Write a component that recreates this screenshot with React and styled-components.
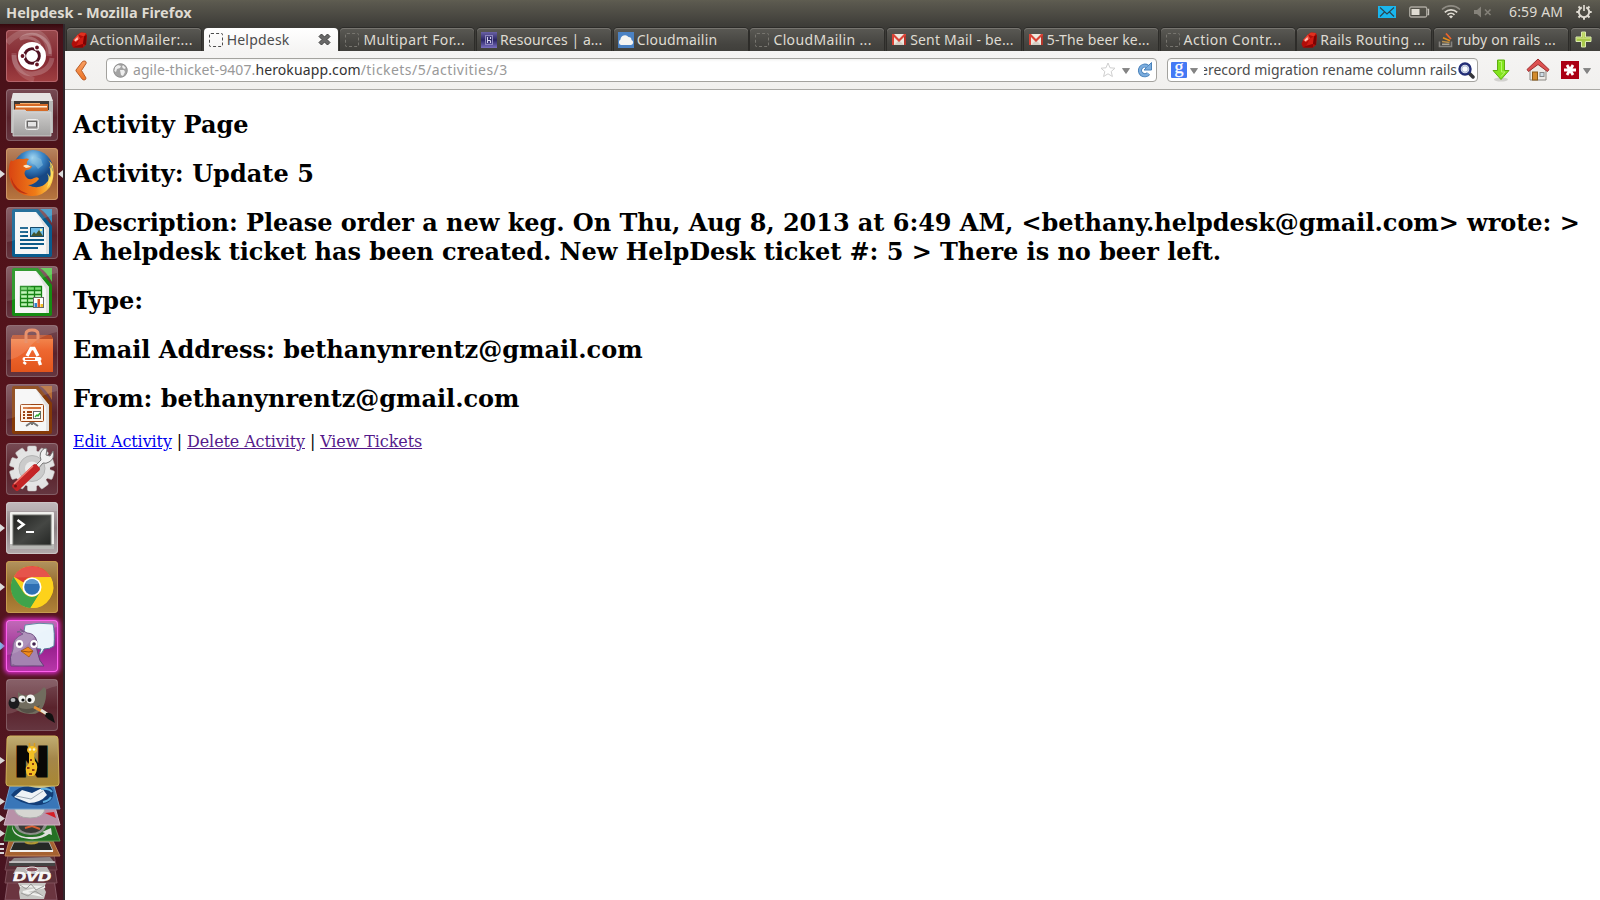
import React from "react";
import styled, { createGlobalStyle } from "styled-components";

const ui = `"Noto Sans", "Open Sans", sans-serif`;

const Global = createGlobalStyle`
  * { box-sizing: border-box; }
  html, body { margin: 0; padding: 0; background: #fff; overflow: hidden; }
  svg { display: block; flex: none; }
`;

const Desktop = styled.div`
  width: 1600px;
  height: 900px;
  display: flex;
  flex-direction: column;
  overflow: hidden;
  background: linear-gradient(#5f5d51 0, #5a584e 3px, #3c3b37 27px, #3c3b37 52px);
`;

const Panel = styled.header`
  height: 24px;
  flex: none;
  display: flex;
  align-items: center;
  justify-content: space-between;
  padding: 0 8px 0 6px;
  font-family: ${ui};
  color: #dfdbd2;
`;

const Label = styled.span`
  font-size: ${(p) => p.$size || 14}px;
  font-weight: ${(p) => (p.$bold ? 700 : 400)};
  letter-spacing: ${(p) => p.$track || 0}px;
  line-height: 20px;
  white-space: pre;
`;

const Indicators = styled.div`
  display: flex;
  align-items: center;
`;

const Slot = styled.div`
  width: ${(p) => p.$w}px;
  flex: none;
  display: flex;
  align-items: center;
`;

const Body = styled.div`
  flex: 1;
  min-height: 0;
  display: flex;
`;

const Launcher = styled.nav`
  width: 65px;
  flex: none;
  display: flex;
  flex-direction: column;
  gap: 7px;
  padding-top: 6px;
  background: linear-gradient(#35090d 0, #48121a 5px, #4d1219 100px, #56141d 450px, #501620 750px, #451320 876px);
  border-right: 2px solid #30272c;
`;

const LaunchRow = styled.div`
  height: 52px;
  flex: none;
  display: flex;
  align-items: center;
  justify-content: space-between;
`;

const Pip = styled.svg`
  visibility: ${(p) => (p.$on ? "visible" : "hidden")};
`;

const Tile = styled.div`
  width: 52px;
  height: 52px;
  overflow: hidden;
  border-radius: 4px;
  margin-left: 1px;
  background: ${(p) => p.$bg};
  box-shadow: inset 0 0 0 1px ${(p) => p.$edge || "rgba(255,255,255,.2)"}, ${(p) => p.$glow || "0 0 0 transparent"};
`;

const Browser = styled.section`
  flex: 1;
  min-width: 0;
  display: flex;
  flex-direction: column;
`;

const TabStrip = styled.div`
  height: 27px;
  flex: none;
  display: flex;
  align-items: flex-end;
  gap: 2.7px;
  padding-left: 2px;
`;

const Tab = styled.div`
  width: ${(p) => p.$w || 134}px;
  height: 23px;
  flex: none;
  display: flex;
  align-items: center;
  gap: 3px;
  padding: 0 4px;
  font-family: ${ui};
  border-radius: 4px 4px 0 0;
  color: ${(p) => (p.$active ? "#4c4c4c" : "#dfdbd2")};
  background: ${(p) => (p.$active ? "linear-gradient(#fff, #f5f4f3)" : "linear-gradient(#5a5954, #454440 70%, #403f3b)")};
  box-shadow: ${(p) => (p.$active ? "none" : "inset 0 1px 0 #777570, 0 0 0 1px #2d2c29")};
`;

const IconBox = styled.div`
  width: 16px;
  height: 16px;
  flex: none;
  display: flex;
  align-items: center;
  justify-content: center;
`;

const Blank = styled.div`
  width: 14px;
  height: 14px;
  border: 1px dashed ${(p) => (p.$active ? "#4c4c4c" : "#77756f")};
  border-radius: 2px;
`;

const CloseSlot = styled.div`
  margin-left: auto;
  padding-right: 3px;
`;

const Toolbar = styled.div`
  height: 39px;
  flex: none;
  display: flex;
  align-items: center;
  padding: 0 0 0 10px;
  background: linear-gradient(#f5f4f3, #f1f0ee);
  border-bottom: 1px solid #aaa9a5;
`;

const Field = styled.div`
  width: ${(p) => p.$w}px;
  height: 24px;
  flex: none;
  display: flex;
  align-items: center;
  margin-left: ${(p) => p.$ml}px;
  padding: 0 ${(p) => p.$pr}px 0 ${(p) => p.$pl}px;
  border: 1px solid #a3a29e;
  border-radius: 4px;
  background: linear-gradient(#f3f3f2, #fff 3px);
  font-family: ${ui};
`;

const Url = styled.div`
  flex: 1;
  display: flex;
  padding-left: 5px;
  color: #999;
  white-space: nowrap;
`;

const Host = styled(Label)`
  color: #333;
`;

const Query = styled.div`
  width: 254px;
  height: 20px;
  display: flex;
  justify-content: flex-end;
  overflow: hidden;
  margin: 0 1px 0 6px;
  color: #4c4c4c;
`;

const Tools = styled.div`
  flex: 1;
  display: flex;
  align-items: center;
  padding-left: 13px;
`;

const HomeButton = styled.div`
  margin: 0 11px 0 15px;
`;

const ToolGroup = styled.div`
  display: flex;
  align-items: center;
  gap: ${(p) => p.$gap || 4}px;
`;

const Page = styled.main`
  flex: 1;
  padding: 0 8px;
  background: #fff;
  color: #000;
  font-family: "DejaVu Serif", serif;
`;

const Heading = styled.h2`
  margin: 20px 0;
  font-size: 24px;
  font-weight: 700;
  line-height: 29px;
  letter-spacing: ${(p) => p.$track || 0}px;
`;

const Links = styled.div`
  margin-top: -1px;
  font-size: 16px;
  line-height: 19px;
  letter-spacing: -0.11px;
`;

const Link = styled.a`
  color: ${(p) => (p.$visited ? "#551a8b" : "#0000ee")};
  text-decoration: underline;
`;

/* ---------- small icons ---------- */

const Ruby = () => (
  <svg width="16" height="16" viewBox="0 0 16 16">
    <path d="M.5 12 2 8 7 2.500 10 .5 15 1 16 4 15 13 12 15.500 2 15.500Z" fill="#b30d09" />
    <path d="M7 2.500 10 .5 15 1 13 4.500Z" fill="#e0301f" />
    <path d="M2 8 7 2.500 9 6.500 5 10Z" fill="#ef4a38" />
    <path d="M9 6.500 13 4.500 12 12 5 14Z" fill="#cf1b13" />
    <path d="M13 4.500 15.500 3 15 13 12 12Z" fill="#7c0202" />
    <path d="M3.500 8 6.500 5 7 7.500 4 9.500Z" fill="#ffc5bb" />
    <path d="M5 14 12 12 12 15.500 2 15.500Z" fill="#8d0503" />
  </svg>
);
const Heroku = () => (
  <svg width="16" height="16" viewBox="0 0 16 16">
    <defs><linearGradient id="hk" x2="0" y2="1"><stop stopColor="#6a61a6" /><stop offset=".5" stopColor="#2b2565" /><stop offset="1" stopColor="#7a6fc0" /></linearGradient></defs>
    <rect width="16" height="16" fill="url(#hk)" />
    <rect x="4.500" y="3.500" width="7" height="9" fill="none" stroke="#8d86bd" />
    <path d="M6.500 5v6M6.500 8.500h3V11M9.500 5v2" fill="none" stroke="#d5d2ec" />
  </svg>
);
const Cloud = () => (
  <svg width="16" height="16" viewBox="0 0 16 16">
    <rect width="16" height="16" fill="#4b82c4" />
    <path d="M3 13a3 3 0 0 1-.5-5.500A4.500 4.500 0 0 1 10.500 5a3 3 0 0 1 3 3A2.600 2.600 0 0 1 13 13Z" fill="#f4f4f2" />
  </svg>
);
const Gmail = () => (
  <svg width="16" height="16" viewBox="0 0 16 16">
    <rect x="1" y="2" width="14" height="11" fill="#eee9df" />
    <path d="M3 13 8 8l5 5Z" fill="#d5cfc5" />
    <path d="M1 13V2h2l5 5 5-5h2v11h-2V5L8 10 3 5v8Z" fill="#db4437" />
    <path d="M13 13V5l2-2v10Z" fill="#b5362b" />
  </svg>
);
const Stack = () => (
  <svg width="16" height="16" viewBox="0 0 16 16" fill="none">
    <path d="M1.500 9.500v5h12v-5" stroke="#85837f" strokeWidth="1.600" />
    <path d="M4 12.300h7.500" stroke="#aaa69a" strokeWidth="1.600" />
    <path d="M4 9.500l7.500 1" stroke="#b98f4c" strokeWidth="1.600" />
    <path d="M5 5.800l7 3" stroke="#e58e1b" strokeWidth="1.700" />
    <path d="M8 1.500l5 5.500" stroke="#f0642a" strokeWidth="1.800" />
  </svg>
);
const Close = () => (
  <svg width="13" height="13" viewBox="0 0 13 13">
    <path d="M3.500 1 6.500 4 9.500 1 12 3.500 9 6.500 12 9.500 9.500 12 6.500 9 3.500 12 1 9.500 4 6.500 1 3.500Z" fill="#686868" stroke="#3e3e3e" />
  </svg>
);
const Plus = () => (
  <svg width="18" height="17" viewBox="0 0 18 17">
    <path d="M6.500 1h4v5H16v4.500h-5.500V16h-4v-5.500H1V6h5.500Z" fill="#a8c84a" stroke="#dcebb0" />
    <path d="M7.500 2h2v5H15v1H2V7h5.500Z" fill="#c5dc72" />
  </svg>
);
const MailInd = () => (
  <svg width="18" height="12" viewBox="0 0 18 12">
    <rect width="18" height="12" fill="#19b6ee" />
    <path d="M2 1.500 9 8l7-6.500M2 10.500 6.500 6M16 10.500 11.500 6" fill="none" stroke="#2b4450" strokeWidth="1.100" />
  </svg>
);
const Battery = () => (
  <svg width="21" height="12" viewBox="0 0 21 12">
    <rect x=".7" y="1" width="17" height="10" rx="1.500" fill="none" stroke="#aaa79e" strokeWidth="1.300" />
    <rect x="2.500" y="3" width="8" height="6" fill="#dfdbd2" />
    <path d="M18.500 3.500h1v5h-1" fill="none" stroke="#c4c0b8" strokeWidth="1.300" />
  </svg>
);
const Wifi = () => (
  <svg width="20" height="14" viewBox="0 0 20 14" fill="none">
    <path d="M1 4.500a13 13 0 0 1 18 0" stroke="#8f8c84" strokeWidth="1.600" />
    <path d="M3.800 7.300a9 9 0 0 1 12.400 0" stroke="#dfdbd2" strokeWidth="1.700" />
    <path d="M6.500 9.800a5 5 0 0 1 7 0" stroke="#dfdbd2" strokeWidth="1.700" />
    <path d="M8 11.500a3 3 0 0 1 4 0l-2 2Z" fill="#dfdbd2" />
  </svg>
);
const Muted = () => (
  <svg width="18" height="12" viewBox="0 0 18 12">
    <path d="M0 4h3l4-3.500v11L3 8H0Z" fill="#85827a" />
    <path d="m11 3.500 5.500 5.500M16.500 3.500 11 9" stroke="#85827a" strokeWidth="1.500" />
  </svg>
);
const Gear = () => (
  <svg width="16" height="16" viewBox="0 0 16 16" fill="none" stroke="#dfdbd2">
    <path d="M5.800 3.300a5.200 5.200 0 1 0 4.400 0" strokeWidth="2" />
    <path d="M8 1v6" strokeWidth="1.700" />
    <path d="M.3 8H3M13 8h2.700M8 13v2.800M2.500 2.500l2 2M13.500 2.500l-2 2M2.500 13.500l2-2M13.500 13.500l-2-2" strokeWidth="2" />
  </svg>
);
const Back = () => (
  <svg width="13" height="21" viewBox="0 0 13 21">
    <defs><linearGradient id="bk" x2="0" y2="1"><stop stopColor="#f9a063" /><stop offset="1" stopColor="#ed7426" /></linearGradient></defs>
    <path d="M9 1Q11 .5 11.300 3L6.500 10.500 11 18Q11 20 9 20L7.500 19.500 1 11V10L7.500 1.500Z" fill="url(#bk)" stroke="#b85c26" />
  </svg>
);
const Globe = () => (
  <svg width="15" height="15" viewBox="0 0 15 15">
    <circle cx="7.500" cy="7.500" r="7" fill="#a4a4a4" />
    <path d="M2 4 5 2 8 3 7 5 4 6 3 9 1 8ZM7 7l4 0 1 2-2 4-2-1ZM10 2l3 3-2 1-2-2Z" fill="#eee" />
    <circle cx="7.500" cy="7.500" r="6.700" fill="none" stroke="#939393" />
  </svg>
);
const Star = () => (
  <svg width="16" height="16" viewBox="0 0 16 16">
    <path d="m8 1 2 4.800 5 .4-3.800 3.300 1.200 5L8 11.800 3.600 14.500l1.200-5L1 6.200l5-.4Z" fill="#fff" stroke="#cfcfcf" />
  </svg>
);
const Caret = () => (
  <svg width="8" height="8" viewBox="0 0 8 8">
    <path d="M.5 2.500h7L4 7.500Z" fill="#858585" stroke="#666" strokeWidth=".6" />
  </svg>
);
const Reload = () => (
  <svg width="16" height="16" viewBox="0 0 16 16">
    <path d="M11.500 4.500A4.800 4.800 0 1 0 12.500 11.500" fill="none" stroke="#4a82ba" strokeWidth="4.200" />
    <path d="M15.500.5v7.500H8Z" fill="#7badde" stroke="#4a82ba" />
    <path d="M11.500 4.500A4.800 4.800 0 1 0 12.500 11.500" fill="none" stroke="#7badde" strokeWidth="2.500" />
  </svg>
);
const GoogleG = () => (
  <svg width="16" height="16" viewBox="0 0 16 16">
    <rect width="16" height="16" rx="1" fill="#4479f5" />
    <text x="8" y="11.300" fontSize="18" fill="#fff" stroke="#fff" strokeWidth=".3" textAnchor="middle" fontFamily="Liberation Serif, serif">g</text>
  </svg>
);
const Magnifier = () => (
  <svg width="17" height="17" viewBox="0 0 17 17">
    <path d="m10.500 10.500 4.500 4.500" stroke="#35363b" strokeWidth="3.500" strokeLinecap="round" />
    <circle cx="7" cy="7" r="5.500" fill="#e2e9f4" stroke="#232e77" strokeWidth="2.400" />
    <circle cx="7" cy="7" r="3.200" fill="#f9fbff" stroke="#a8b4cf" />
  </svg>
);
const Download = () => (
  <svg width="20" height="23" viewBox="0 0 20 23">
    <ellipse cx="10" cy="20.500" rx="7" ry="2" fill="#d2d1ce" />
    <path d="M6.500 1h7v10.500H18L10 20.500 2 11.500h4.500Z" fill="#83e51d" stroke="#5fae12" />
    <path d="M8 2.500h2.500V13H14l-4 4.500" fill="none" stroke="#b7f56d" />
  </svg>
);
const Home = () => (
  <svg width="24" height="24" viewBox="0 0 24 24">
    <path d="M4 12 12 5l8 7v10H4Z" fill="#eceae6" stroke="#8c8984" />
    <rect x="6.500" y="14" width="5" height="8" fill="#d28b2d" stroke="#8b5a17" />
    <rect x="14" y="14.500" width="4" height="4" fill="#cfdce6" stroke="#85888a" />
    <path d="M12 1 23 11.500 21.500 13.500 12 6.500 2.500 13.500 1 11.500Z" fill="#dc5050" stroke="#9e2f2f" />
  </svg>
);
const LastPass = () => (
  <svg width="18" height="18" viewBox="0 0 18 18">
    <rect width="18" height="18" fill="#ab0014" />
    <path d="M3 9h12M6 4l6 10M12 4 6 14" stroke="#fff" strokeWidth="2.800" />
  </svg>
);

/* ---------- launcher icons, 52x52 ---------- */

const Art = ({ children }) => <svg width="52" height="52" viewBox="0 0 52 52">{children}</svg>;

const Gloss = () => <path d="M1 1h50v6Q30 12 22 24 12 34 1 35Z" fill="#fff" opacity=".13" />;

const Ubuntu = () => (
  <Art>
    <g fill="none" stroke="#fff">
      <path d="M44 24A18 18 0 0 0 14 9Q28 5 34 15" strokeWidth="3" opacity=".23" />
      <path d="M8 25A18 18 0 0 0 26 44Q44 42 46 28" strokeWidth="5" opacity=".2" />
      <path d="M1 13Q14 -1 30 2Q44 8 43 26" strokeWidth="6" opacity=".15" />
      <path d="M8 23Q8 44 28 50" strokeWidth="5" opacity=".13" />
    </g>
    <circle cx="26" cy="26" r="14" fill="#fff" />
    <circle cx="26" cy="26" r="7.300" fill="none" stroke="#4f1020" strokeWidth="3" />
    <g stroke="#fff" strokeWidth="1.200" fill="#651323">
      <circle cx="16.500" cy="26" r="2.500" /><circle cx="31" cy="17.500" r="2.500" /><circle cx="31" cy="34.500" r="2.500" />
    </g>
    <circle cx="26" cy="26" r="5.500" fill="#fff" />
  </Art>
);
const Files = () => (
  <Art>
    <defs><linearGradient id="fi" x2="0" y2="1"><stop stopColor="#d0cfce" /><stop offset="1" stopColor="#a2a1a0" /></linearGradient></defs>
    <path d="M7 4h37l3 9v31H5V13Z" fill="#b9b9b8" />
    <path d="M7 4h37l3 8H5Z" fill="#e4e3e2" />
    <path d="M8 12h35v9H8Z" fill="#3e3935" />
    <path d="M9 15h33v7H9Z" fill="#d66b27" /><path d="M10 17h31v1.500H10Z" fill="#fff0d8" /><path d="M14 14h20v1H14Z" fill="#f5af6e" />
    <path d="M7 21h12l2 2h24v24H7Z" fill="url(#fi)" stroke="#d9d8d7" strokeWidth=".8" />
    <rect x="19.500" y="30.500" width="13" height="10" rx="2" fill="#b2b1b0" stroke="#efefee" />
    <rect x="21.500" y="32.500" width="9" height="5.500" fill="#e4e4e4" stroke="#686766" />
  </Art>
);
const Firefox = () => (
  <Art>
    <defs>
      <radialGradient id="fg" cx=".5" cy=".2"><stop stopColor="#a5d8f2" /><stop offset=".5" stopColor="#3c88c8" /><stop offset="1" stopColor="#174784" /></radialGradient>
      <linearGradient id="ff"><stop stopColor="#d94412" /><stop offset=".6" stopColor="#ef7c17" /><stop offset="1" stopColor="#ffd64b" /></linearGradient>
    </defs>
    <circle cx="27" cy="22" r="20" fill="url(#fg)" />
    <path d="M28 8l7 3 2 6-5 4-3-4-4-2Z" fill="#8dc3df" opacity=".5" />
    <path d="M5 12q1 2 4 0 3-2 8-1 4-1 6 0-3 3-2 6l5 1q-1 4-6 4-3 3 0 7 3 4 8 1 4-2 5 1-5 6-11 6 12 6 20-4 5-7 1-15l4 6q-1-8-5-12 4 3 5 6 2 12-3 21Q36 49 25 48 9 47 4 32 1 20 5 12Z" fill="url(#ff)" />
    <path d="M5 29q4 13 17 17-9 0-14-7Q5 34 5 29Z" fill="#bd3211" />
    <path d="M44 14q7 16-3 26 3-10 0-15l4 5Z" fill="#ffe269" opacity=".8" />
    <path d="M17 18q3-2 5-1l3 2-5 1Z" fill="#fce6c5" />
  </Art>
);
const Doc = ({ c, light, children }) => (
  <Art>
    <path d="M8 2h24l14 17v29q0 2-2 2H8q-2 0-2-2V4q0-2 2-2Z" fill={c} />
    <path d="M34 2h12v14Q40 5 34 2Z" fill={light} />
    <path d="M9 5h21l13 16v26H9Z" fill="#f6f6f6" />
    <path d="M30 5 43 21V47H40V23Z" fill="#d8d8d8" opacity=".7" />
    {children}
    <Gloss />
  </Art>
);
const Writer = () => (
  <Doc c="#095c8e" light="#3994c4">
    <path d="M14 21h8M14 25h8M14 29h8M14 33h24M14 37h24M14 41h18" stroke="#0c5a88" strokeWidth="2" />
    <rect x="24.500" y="20.500" width="13" height="9" fill="#70bde8" stroke="#174a6b" />
    <path d="m25 29 3-4 2 2 3-4 4 6Z" fill="#44542d" />
    <circle cx="35" cy="23" r="1.200" fill="#fff5a0" />
  </Doc>
);
const Calc = () => (
  <Doc c="#168c13" light="#55c64b">
    <rect x="14" y="20" width="22" height="20" fill="#bdf3b5" />
    <path d="M14 20h22v4H14Z" fill="#78d970" />
    <path d="M14 20.500h22M14 24.500h22M14 28.500h22M14 32.500h22M14 36.500h22M14 40.500h22M14.500 20v20M21.500 20v20M28.500 20v20M35.500 20v20" stroke="#168215" strokeWidth="1.300" />
    <rect x="27.500" y="31.500" width="10" height="10" fill="#fff" stroke="#686868" />
    <path d="M28.500 37h2.500v4h-2.500Z" fill="#2d83cf" /><path d="M31.500 33h2.500v8h-2.500Z" fill="#dc5a26" /><path d="M34.500 38H37v3h-2.500Z" fill="#f1bd25" />
  </Doc>
);
const Impress = () => (
  <Doc c="#853a08" light="#b56b35">
    <path d="m20 42 6-4 6 4M26 36v5" stroke="#777" strokeWidth="2" fill="none" />
    <rect x="14.500" y="20.500" width="23" height="17" rx="1" fill="#fff4e8" stroke="#9b4312" />
    <path d="M17 24h18" stroke="#d2713a" strokeWidth="2" />
    <path d="M17 28h2m2 0h5M17 31h2m2 0h5M17 34h2m2 0h5" stroke="#9b4312" strokeWidth="2" />
    <rect x="27.500" y="27.500" width="7" height="7" fill="#fff" stroke="#666" />
    <path d="m29 33 2-2 1 1 2-3" stroke="#2ca52a" fill="none" strokeWidth="1.400" />
  </Doc>
);
const Software = () => (
  <Art>
    <defs><linearGradient id="sw" x2="0" y2="1"><stop stopColor="#f38d55" /><stop offset=".4" stopColor="#ee6831" /><stop offset="1" stopColor="#e2551c" /></linearGradient></defs>
    <path d="M5 14 7 10h38l2 4v33H5Z" fill="url(#sw)" />
    <path d="M5 14 7 10h38l2 4Z" fill="#bb502c" />
    <path d="M20 18V9q0-4 6-4t6 4v9" fill="none" stroke="#e58258" strokeWidth="3" />
    <path d="M21 31 25 23.500h3L32 31M18 39l1.500-2M33 36l1.500 4" stroke="#fff" strokeWidth="3.300" fill="none" />
    <path d="M18.500 34h15" stroke="#fff" strokeWidth="4" strokeLinecap="round" />
    <path d="M19 34h10" stroke="#ed6932" strokeWidth="1.800" />
    <Gloss />
  </Art>
);
const Settings = () => (
  <Art>
    <g fill="#e2e2e2" stroke="#c2c2c2" strokeWidth=".5">
      {[0, 36, 72, 108, 144, 180, 216, 252, 288, 324].map((a) => (
        <rect key={a} x="21.500" y="3" width="9" height="11" rx="1.500" transform={`rotate(${a} 26 25.500)`} />
      ))}
    </g>
    <circle cx="26" cy="25.500" r="18" fill="#e4e4e4" />
    <circle cx="26" cy="25.500" r="13" fill="#cbcbcb" stroke="#b5b5b5" />
    <circle cx="26" cy="25.500" r="7" fill="#ececec" />
    <path d="M28 24 35 17q-3-8 4-12l2 1-1 6 4 1 3-5q2 8-4 11-3 2-6 1l-6 7Z" fill="#f1f1f1" stroke="#777" />
    <path d="m8 43 21-20 3 3-21 20Z" stroke="#c32325" strokeWidth="4" strokeLinejoin="round" fill="#d83832" />
    <path d="m8 41 19-18" stroke="#f07a70" strokeWidth="1.500" />
    <circle cx="9.500" cy="43" r="1.500" fill="#6e1212" />
  </Art>
);
const Terminal = () => (
  <Art>
    <defs><linearGradient id="tm" x2="1" y2="1"><stop stopColor="#20211f" /><stop offset=".55" stopColor="#454744" /><stop offset="1" stopColor="#252725" /></linearGradient></defs>
    <rect x="4" y="10" width="44" height="36" rx="1" fill="#f0f0ed" />
    <path d="M4 42h44v5H4Z" fill="#b8b8b5" />
    <rect x="7" y="13" width="38" height="30" fill="url(#tm)" stroke="#6e716c" />
    <path d="m11.500 18 6 4.500-6 4.500" fill="none" stroke="#fff" strokeWidth="2.600" />
    <path d="M20 30h8" stroke="#fff" strokeWidth="2" />
    <path d="M1 1h50v8H1Z" fill="#fff" opacity=".16" />
  </Art>
);
const Chrome = () => (
  <Art>
    <circle cx="26" cy="26" r="21" fill="#fdd21b" />
    <path d="M7.800 15.500A21 21 0 0 1 44.500 16H26a10 10 0 0 0-8.500 5.500Z" fill="#de3f35" />
    <path d="M7.500 15.800A21 21 0 0 0 24.500 47L34.500 31A10 10 0 0 1 17.300 31Z" fill="#3fa34b" />
    <path d="M44.800 16A21 21 0 0 1 24.500 47L34.500 31Q38 23 32 16Z" fill="#fdd21b" />
    <path d="M7.500 16.500Q10 10 18 6.500q12-4 22 4l4.500 5.500Z" fill="#ed6a61" opacity=".5" />
    <circle cx="26" cy="26" r="9.500" fill="#fff" />
    <circle cx="26" cy="26" r="7.800" fill="#2f70b4" />
    <path d="M19 23a7.500 7.500 0 0 1 14 0Z" fill="#5c98ce" />
  </Art>
);
const Pidgin = () => (
  <Art>
    <path d="M19 5q14-3 28-1 2 8 1 22-4 3-10 3-1 4-5 6l2-6-12-1q-7-11-4-23Z" fill="#eaf4fb" stroke="#4e7795" />
    <path d="M17 14q-4-3-6-2 4-2 7 0l-4-3 7 4q8 0 10 9-1 7 1 12 1 7 6 12H5q-2-9 2-17-1-11 10-15Z" fill="#a483b1" stroke="#65427a" />
    <path d="M7 44q6 4 20 1l6 1H5Z" fill="#80608e" />
    <ellipse cx="13.500" cy="24" rx="3.700" ry="4" fill="#fff" /><circle cx="13.500" cy="24" r="1.800" fill="#41214e" />
    <ellipse cx="28" cy="24" rx="3.700" ry="4" fill="#fff" /><circle cx="28" cy="24" r="1.800" fill="#41214e" />
    <path d="m15 31 7-4 5 4-4 6Z" fill="#f18b1c" stroke="#9b5112" strokeWidth=".7" /><path d="m15 31 8 1 4-1" fill="none" stroke="#9b5112" />
    <Gloss />
  </Art>
);
const Gimp = () => (
  <Art>
    <Gloss />
    <path d="M12 20 12 13q4 4 8 3 9 3 18-8l2 2q1 10-3 18-4 8-13 7Q12 34 8 28L4 24Z" fill="#716c5e" />
    <path d="M12 28q9 5 22-2-4 9-13 8-7-1-9-6Z" fill="#555147" />
    <ellipse cx="8" cy="24" rx="5.500" ry="6" fill="#1c1c1e" /><ellipse cx="7" cy="21" rx="2.500" ry="2" fill="#b6b8ba" />
    <circle cx="16" cy="20" r="3.500" fill="#f3f3f0" /><circle cx="17" cy="21" r="1.600" fill="#111" />
    <circle cx="24.500" cy="20" r="4.500" fill="#f3f3f0" /><circle cx="23.500" cy="21" r="2" fill="#111" />
    <path d="m28 28 13 7" stroke="#e69131" strokeWidth="2.600" /><path d="m35 31 6 4" stroke="#e5e2d8" strokeWidth="3" />
    <path d="M40 34q5-1 7 3l2 7-7-4-3-3Z" fill="#111" />
  </Art>
);

const Folded = styled.svg`
  overflow: visible;
`;

/* Items collapsed at the foot of the launcher. */
const FoldedStack = () => (
  <Folded width="63" height="162" viewBox="0 738 63 162">
    <defs>
      <linearGradient id="gd" x2="0" y2="1"><stop stopColor="#c2ae72" /><stop offset=".45" stopColor="#a4864a" /><stop offset="1" stopColor="#a98732" /></linearGradient>
    </defs>
    <path d="M9 872h44l4 28H5Z" fill="#6b3540" stroke="#865764" />
    <path d="M9 856h44l4 27H5Z" fill="#5d3039" stroke="#80505b" />
    <path d="M9 850h44l4 20H5Z" fill="#582d36" stroke="#764853" />
    <path d="M18 883h28l-2 5 2 4-2 7H20l-1-7 1-4Z" fill="#c7c7c4" /><path d="m20 886 25 1-22 5 20 4" fill="none" stroke="#f0f0ee" strokeWidth="2" />
    <path d="m20 885 6 4 5-5 5 6 8-4M21 893l7 3 7-5 8 5" fill="none" stroke="#9b9b99" />
    <path d="m17 867 30 0 4 7H13Z" fill="#b9b7b6" /><ellipse cx="32" cy="869.500" rx="6" ry="2.500" fill="#89505a" stroke="#eee" />
    <text x="32" y="881" fontSize="12" fontWeight="700" fontStyle="italic" textAnchor="middle" textLength="38" lengthAdjust="spacingAndGlyphs" fontFamily="Liberation Sans, sans-serif" fill="#f5f5f5" stroke="#fff" strokeWidth=".5">DVD</text>
    <path d="m14 858 36-1 5 6H9Z" fill="#8d8688" /><path d="M9 863h46v3H9Z" fill="#444" /><path d="M9 862h46" stroke="#efefef" />
    <path d="M9 841h44l7 15H5Z" fill="#a66231" stroke="#c1865a" />
    <path d="m14 842 35 0 4 9H10Z" fill="#252826" stroke="#aaa" /><path d="M10 851h43" stroke="#f3f1ee" strokeWidth="2" /><path d="M25 842q6 3 13 0" stroke="#b29734" strokeWidth="2" fill="none" />
    <path d="M8 824h46l6 17H4Z" fill="#257024" stroke="#529850" />
    <path d="M12 825q2 13 20 12 9 0 13-4l-3-1 9-4 1 7-3-1q-8 6-20 5-18-2-17-14Z" fill="#dededb" />
    <path d="M14 825h33q-3 10-17 10-13-1-16-10Z" fill="#8c8f8a" /><path d="M18 825h26q-3 8-13 8-11 0-13-8Z" fill="#373b36" />
    <path d="m25 828 7-2 8 3" stroke="#d45d31" strokeWidth="2" fill="none" />
    <path d="M9 807h46l5 18H4Z" fill="#b891a8" stroke="#d2b5c5" />
    <path d="M14 807h31q0 11-15 11t-16-11Z" fill="#d6d6d2" stroke="#aaa" /><path d="m45 813 9-1 2 6-9-4Z" fill="#d71c25" />
    <path d="M10 786h44l6 23H4Z" fill="#3976b8" stroke="#6c9dcc" />
    <path d="M11 795q6-9 20-9h18q7 5 3 13-6 7-18 6-16-2-23-10Z" fill="#123e78" />
    <path d="m14 797 8-7 10 3 10-5 5 7q-7 8-18 8Z" fill="#eef3f6" /><path d="m16 796 15 3 12-8" stroke="#9aa8b4" fill="none" />
    <path d="M41 789q8-1 11 3M43 802q6-1 8-5" stroke="#5caee1" strokeWidth="2" fill="none" />
    <ellipse cx="40" cy="785" rx="12" ry="3" fill="#c5ccaa" />
    <path d="M10 736h45q3 0 3 3l1 44q0 3-3 3H9q-3 0-3-3l1-44q0-3 3-3Z" fill="url(#gd)" stroke="#cfb25a" />
    <text x="32" y="776" fontSize="43" fontWeight="900" textAnchor="middle" textLength="34" lengthAdjust="spacingAndGlyphs" fontFamily="Liberation Sans, sans-serif" fill="#090806" stroke="#090806" strokeWidth="3">N</text>
    <path d="M29 753h5l1 8q3 3 2 8-1 6-4 7h-5q-3-4-2-9 3-2 3-6Z" fill="#f4be24" />
    <ellipse cx="32" cy="750" rx="5" ry="4" fill="#f4be24" />
    <path d="M29.500 747v-4M34.500 747v-4" stroke="#d99c1f" strokeWidth="1.500" />
    <circle cx="30" cy="749.500" r="1.300" fill="#f6f0d5" /><circle cx="34" cy="749.500" r="1.300" fill="#f6f0d5" />
    <path d="M30 760h2M32 764h2M27 768h2.500M32 770h2.500M29 774h3" stroke="#8a3b10" strokeWidth="2" />
    <path d="m0 757 5 3.500-5 3.500ZM0 798l5 3.500-5 3.500ZM0 815l5 3.500-5 3.500ZM0 830l5 3.500-5 3.500ZM0 843h4v2H0ZM0 848h4v2H0ZM0 852h4v2H0Z" fill="#d9d7d7" />
  </Folded>
);

const neutral = "linear-gradient(#774b54 0, #5a232c 55%, #653640)";
const apps = [
  { icon: Ubuntu, bg: "linear-gradient(#98494c, #832831 55%, #a03f41)", edge: "#b5646b" },
  { icon: Files, bg: neutral },
  { icon: Firefox, bg: "linear-gradient(#b88560, #9c5630 50%, #b87740)", edge: "#cd9567", run: "#ddd", focus: true },
  { icon: Writer, bg: neutral },
  { icon: Calc, bg: neutral },
  { icon: Software, bg: neutral },
  { icon: Impress, bg: neutral },
  { icon: Settings, bg: neutral },
  { icon: Terminal, bg: "linear-gradient(#b7adb0, #8c8184 50%, #b3aaac)", edge: "#cbc3c4", run: "#ddd" },
  { icon: Chrome, bg: "linear-gradient(#b2935f, #936828 50%, #b18339)", edge: "#c79b50", run: "#ddd" },
  { icon: Pidgin, bg: "linear-gradient(#b955ae, #971f8c 50%, #b838aa)", edge: "#ff61ec", run: "#77bde4", glow: "0 0 4px 2px #d02bc0" },
  { icon: Gimp, bg: neutral },
];

const tabs = [
  { icon: Ruby, text: "ActionMailer:...", track: 0.3 },
  { text: "Helpdesk", track: 0.2, active: true },
  { text: "Multipart For...", track: 0.42 },
  { icon: Heroku, text: "Resources | a...", track: 0.05 },
  { icon: Cloud, text: "Cloudmailin", track: 0.17 },
  { text: "CloudMailin ...", track: 0.35 },
  { icon: Gmail, text: "Sent Mail - be...", track: 0.2 },
  { icon: Gmail, text: "5-The beer ke...", track: 0.15 },
  { text: "Action Contr...", track: 0.48 },
  { icon: Ruby, text: "Rails Routing ...", track: 0.25 },
  { icon: Stack, text: "ruby on rails ...", track: 0.15 },
];

export default function App() {
  return (
    <Desktop>
      <Global />
      <Panel>
        <Label $bold $size={14.5} $track={0.04}>Helpdesk - Mozilla Firefox</Label>
        <Indicators>
          <Slot $w={31}><MailInd /></Slot>
          <Slot $w={32}><Battery /></Slot>
          <Slot $w={33}><Wifi /></Slot>
          <Slot $w={35}><Muted /></Slot>
          <Slot $w={67}><Label $track={0.15}>6:59 AM</Label></Slot>
          <Gear />
        </Indicators>
      </Panel>
      <Body>
        <Launcher>
          {apps.map(({ icon: Icon, bg, edge, run, focus, glow }, i) => (
            <LaunchRow key={i}>
              <Pip $on={run} width="5" height="8" viewBox="0 0 5 8"><path d="M0 0 5 4 0 8Z" fill={run} /></Pip>
              <Tile $bg={bg} $edge={edge} $glow={glow}><Icon /></Tile>
              <Pip $on={focus} width="5" height="8" viewBox="0 0 5 8"><path d="M5 0 0 4 5 8Z" fill="#ddd" /></Pip>
            </LaunchRow>
          ))}
          <FoldedStack />
        </Launcher>
        <Browser>
          <TabStrip>
            {tabs.map(({ icon: Icon, text, active, track }) => (
              <Tab key={text} $active={active}>
                <IconBox>{Icon ? <Icon /> : <Blank $active={active} />}</IconBox>
                <Label $track={track}>{text}</Label>
                {active && <CloseSlot><Close /></CloseSlot>}
              </Tab>
            ))}
            <Tab $w={30}><Plus /></Tab>
          </TabStrip>
          <Toolbar>
            <Back />
            <Field $w={1051} $ml={18} $pl={6} $pr={4}>
              <Globe />
              <Url>
                <Label $track={0.08}>agile-thicket-9407.</Label>
                <Host $track={0.12}>herokuapp.com</Host>
                <Label $track={0.45}>/tickets/5/activities/3</Label>
              </Url>
              <ToolGroup $gap={6}><Star /><Caret /><Reload /></ToolGroup>
            </Field>
            <Field $w={311} $ml={10} $pl={3} $pr={2}>
              <ToolGroup $gap={3}><GoogleG /><Caret /></ToolGroup>
              <Query><Label>erecord migration rename column rails</Label></Query>
              <Magnifier />
            </Field>
            <Tools>
              <Download />
              <HomeButton><Home /></HomeButton>
              <ToolGroup><LastPass /><Caret /></ToolGroup>
            </Tools>
          </Toolbar>
          <Page>
            <Heading $track={0.06}>Activity Page</Heading>
            <Heading $track={0.04}>Activity: Update 5</Heading>
            <Heading $track={-0.045}>
              Description: Please order a new keg. On Thu, Aug 8, 2013 at 6:49 AM, &lt;bethany.helpdesk@gmail.com&gt; wrote: &gt; A helpdesk
              ticket has been created. New HelpDesk ticket #: 5 &gt; There is no beer left.
            </Heading>
            <Heading>Type:</Heading>
            <Heading>Email Address: bethanynrentz@gmail.com</Heading>
            <Heading $track={-0.03}>From: bethanynrentz@gmail.com</Heading>
            <Links>
              <Link>Edit Activity</Link> | <Link $visited>Delete Activity</Link> | <Link $visited>View Tickets</Link>
            </Links>
          </Page>
        </Browser>
      </Body>
    </Desktop>
  );
}
